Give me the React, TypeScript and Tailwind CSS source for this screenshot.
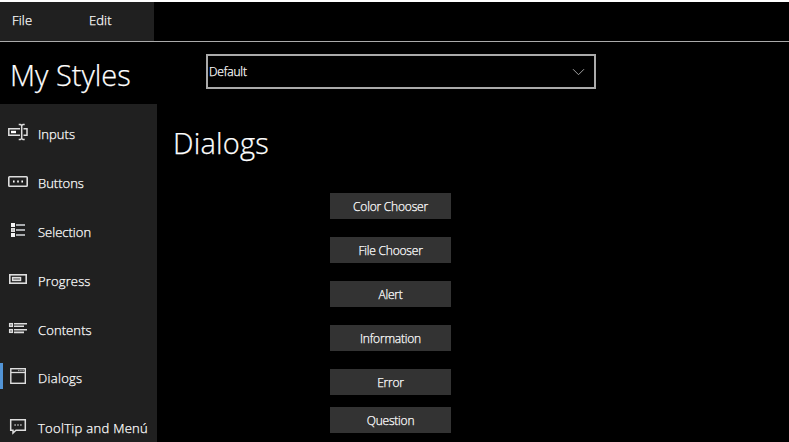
import type { ReactNode } from "react";

function Icon({ children }: { children: ReactNode }) {
  return (
    <svg width="20" height="20" viewBox="0 0 20 20" fill="none" stroke="#dedede" className="shrink-0">
      {children}
    </svg>
  );
}

const items: { label: string; text: string; offset: string; icon: ReactNode }[] = [
  {
    label: "Inputs",
    text: "tracking-[0.05px]",
    offset: "mt-[13px]",
    icon: (
      <>
        <path d="M12 6.7H0.8V13.3H12M15.5 6.7H19V13.3H15.5" strokeWidth="1.5" />
        <path d="M3 10H8" strokeWidth="2.4" stroke="#fff" />
        <path d="M13.7 3.5V16.5M10.7 2.5H12.4L13.7 3.5L15 2.5H16.7M10.7 17.5H12.4L13.7 16.5L15 17.5H16.7" strokeWidth="1.5" />
      </>
    ),
  },
  {
    label: "Buttons",
    text: "tracking-[0px]",
    offset: "mt-[13px]",
    icon: (
      <>
        <rect x="0.8" y="5.8" width="18.4" height="9.5" rx="0.8" strokeWidth="1.6" />
        <path d="M5 10.5h1.6M9.2 10.5h1.6M13.4 10.5H15" strokeWidth="1.8" stroke="#fff" />
      </>
    ),
  },
  {
    label: "Selection",
    text: "tracking-[0px]",
    offset: "mt-[13px]",
    icon: (
      <>
        <path d="M3 5h4M3 15h4" strokeWidth="4" stroke="#f4f4f4" />
        <rect x="3.7" y="8.7" width="2.6" height="2.6" strokeWidth="1.4" fill="#999" />
        <path d="M8 5h9M8 10h9M8 15h9" strokeWidth="2" stroke="#a9abae" />
      </>
    ),
  },
  {
    label: "Progress",
    text: "tracking-[0.15px]",
    offset: "mt-[13px]",
    icon: (
      <>
        <rect x="1.8" y="5.8" width="16.4" height="8.4" strokeWidth="1.6" />
        <rect x="4.6" y="8.5" width="8" height="3" strokeWidth="1.3" fill="#888" />
      </>
    ),
  },
  {
    label: "Contents",
    text: "tracking-[0.1px]",
    offset: "mt-[13px]",
    icon: (
      <>
        <rect x="1.7" y="5.7" width="2.6" height="2.6" strokeWidth="1.5" />
        <rect x="1.7" y="11.7" width="2.6" height="2.6" strokeWidth="1.5" />
        <path d="M6 5.7H19M6 8.2H16M6 11.8H19M6 14.4H16" strokeWidth="1.6" />
      </>
    ),
  },
  {
    label: "Dialogs",
    text: "tracking-[0.3px]",
    offset: "mt-[12px]",
    icon: (
      <>
        <rect x="2.8" y="1.7" width="14.5" height="14.6" strokeWidth="1.4" />
        <path d="M3 5.5H17" strokeWidth="1.3" />
        <path d="M10 3.5H16" strokeWidth="1.6" stroke="#999" strokeDasharray="1.5 0.7" />
      </>
    ),
  },
  {
    label: "ToolTip and Menú",
    text: "tracking-[0.3px]",
    offset: "mt-[13px]",
    icon: (
      <>
        <path d="M2.7 3.7H17.3V14.3H8L5 17V14.3H2.7Z" strokeWidth="1.5" />
        <path d="M6.5 9h1.2M9.4 9h1.2M12.3 9h1.2" strokeWidth="1.3" />
      </>
    ),
  },
];

const buttons = [
  { label: "Color Chooser", gap: "mt-0" },
  { label: "File Chooser", gap: "mt-[18px]" },
  { label: "Alert", gap: "mt-[18px]" },
  { label: "Information", gap: "mt-[18px]" },
  { label: "Error", gap: "mt-[18px]" },
  { label: "Question", gap: "mt-3" },
];

export default function App() {
  return (
    <div className="flex h-[442px] w-[789px] flex-col overflow-hidden bg-black font-['Open_Sans','Noto_Sans',sans-serif] font-light text-white [-webkit-text-stroke:0.25px_white]">
      <div className="h-[2px] shrink-0 bg-white" />
      <header className="flex h-10 shrink-0 border-b border-[#aaaaaa]">
        <nav className="flex w-[154px] bg-[#202020] pl-3 text-[13px] leading-[36px]">
          <span className="w-[77px] tracking-[0.2px]">File</span>
          <span className="tracking-[0.1px]">Edit</span>
        </nav>
      </header>
      <div className="flex h-[62px] shrink-0">
        <h1 className="w-[206px] pl-[10px] pt-[11px] text-[29px] font-light leading-[44px]">My Styles</h1>
        <button className="mt-3 flex h-[35px] w-[390px] items-center justify-between border-2 border-[#aaaaaa] pl-[1px] pr-[9px] text-[12px] font-light tracking-[-0.15px]">
          <span>Default</span>
          <svg width="13" height="8" viewBox="0 0 13 8" fill="none" stroke="#a0a0a0">
            <path d="M1 1.2L6.5 6.7L12 1.2" />
          </svg>
        </button>
      </div>
      <div className="flex h-[338px] shrink-0">
        <aside className="flex w-[157px] shrink-0 flex-col overflow-hidden bg-[#202020] pt-[5px]">
          {items.map((item) => (
            <div key={item.label} className="flex h-[49px] shrink-0">
              <div className={item.label === "Dialogs" ? "mt-[9px] h-[26px] w-[3px] bg-[#5294d6]" : "w-[3px]"} />
              <div className="ml-[5px] mt-[13px] h-5 w-5">
                <Icon>{item.icon}</Icon>
              </div>
              <span className={`ml-[10px] whitespace-nowrap text-[13px] leading-6 ${item.offset} ${item.text}`}>{item.label}</span>
            </div>
          ))}
        </aside>
        <main className="flex flex-1 flex-col">
          <h2 className="mt-[17px] h-[44px] pl-[16px] text-[29px] font-light leading-[44px] tracking-[0.2px]">Dialogs</h2>
          <div className="ml-[173px] mt-[28px] flex w-[121px] flex-col">
            {buttons.map((b) => (
              <button key={b.label} className={`h-[26px] w-full shrink-0 bg-[#333333] pt-[2px] text-[12px] font-light leading-[24px] tracking-[-0.2px] ${b.gap}`}>
                {b.label}
              </button>
            ))}
          </div>
        </main>
      </div>
    </div>
  );
}
